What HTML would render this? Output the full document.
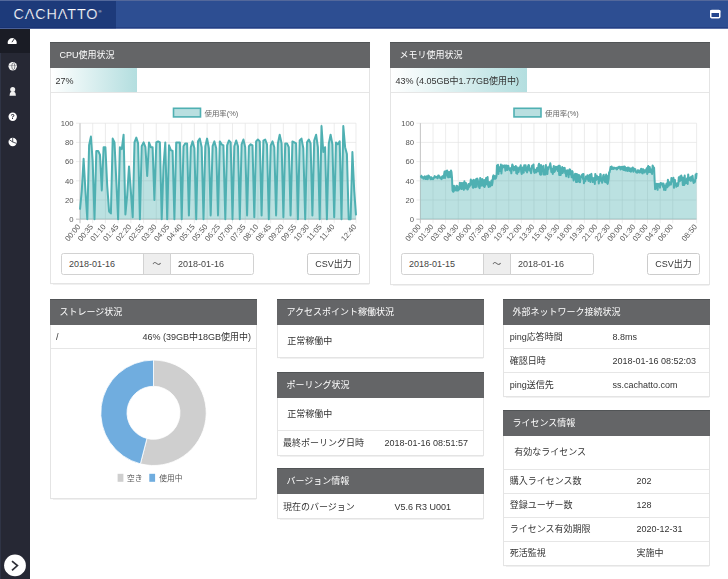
<!DOCTYPE html>
<html lang="ja">
<head>
<meta charset="utf-8">
<title>CACHATTO</title>
<style>
*{box-sizing:border-box;margin:0;padding:0}
html,body{width:728px;height:579px;overflow:hidden;background:#fff}
body{position:relative;font-family:"Liberation Sans","Noto Sans CJK JP",sans-serif;font-size:9px;color:#333;line-height:1;font-weight:400}
.abs{position:absolute}
#content{left:0;top:0;width:728px;height:579px;filter:blur(.4px)}
.bl{filter:blur(.35px)}
#hdr{left:0;top:0;width:728px;height:29px;background:#2d4e92;border-bottom:1px solid #5b70a6;z-index:2}
#logo{left:0;top:0;width:116px;height:29px;background:#1d3a7a;border-bottom:1px solid #4a5f96;z-index:3}
#logot{z-index:4;left:13.4px;top:5.7px;font-size:14.4px;letter-spacing:.9px;color:#fff;font-weight:400;line-height:16px;white-space:nowrap;-webkit-text-stroke:.22px #1d3a7a}
#logot sup{-webkit-text-stroke:0;font-size:4px;vertical-align:top;position:relative;top:-2px;letter-spacing:0}
#side{left:0;top:28px;width:30px;height:551px;background:#262834}
#act{left:0;top:28px;width:30px;height:25px;background:#1a1c25}
.panel{position:absolute;background:#fff;border:1px solid #e4e4e4;box-shadow:0 .6px .8px rgba(0,0,0,.06)}
.ph{position:absolute;left:-1px;top:-1px;right:-1px;height:26px;background:#646567;border-top:1px solid #515456;color:#fff;font-size:9px;font-weight:400;line-height:24.5px;padding-left:9.5px;white-space:nowrap}
.row{position:absolute;left:0;right:0;border-top:1px solid #e6e6e6;white-space:nowrap}
.t{position:absolute;white-space:nowrap;line-height:12px}
.ax{font-family:"Liberation Sans","Noto Sans CJK JP",sans-serif;font-size:7.7px;fill:#555}
.xl{font-size:7.7px;fill:#5a5a5a}
.lg{font-family:"Liberation Sans","Noto Sans CJK JP",sans-serif;font-size:7.4px;fill:#666}
.inp{position:absolute;height:22px;border:1px solid #d2d2d2;background:#fff;font-size:9px;line-height:20px;padding-left:7.5px;color:#444;white-space:nowrap}
.add{position:absolute;height:22px;border:1px solid #d2d2d2;background:#eee;font-size:9px;line-height:20px;text-align:center;color:#555}
.btn{position:absolute;height:22px;border:1px solid #ccc;border-radius:2.5px;background:#fff;font-size:9px;line-height:20px;text-align:center;color:#333;white-space:nowrap}
</style>
</head>
<body>
<div id="hdr" class="abs"></div>
<div id="logo" class="abs"></div>
<div id="logot" class="abs">CACHATTO<sup>®</sup></div>
<svg class="abs" style="left:0;top:0;z-index:5" width="116" height="27" viewBox="0 0 116 27"><polygon points="27.87,14.14 31.11,14.14 32.27,17.13 26.71,17.13" fill="#1d3a7a"/><polygon points="60.97,14.14 64.21,14.14 65.36,17.13 59.80,17.13" fill="#1d3a7a"/></svg>
<svg class="abs bl" style="left:709px;top:9px;z-index:5" width="13" height="11" viewBox="0 0 13 11"><rect x="1.1" y="1.5" width="10.4" height="8.4" rx="1.2" fill="#1f3f8a" opacity=".55"/><rect x="1.75" y="1.55" width="9" height="7.1" rx="1" fill="none" stroke="#fff" stroke-width="1.5"/><rect x="1.2" y="0.9" width="10.1" height="3" rx=".8" fill="#fff"/></svg>

<div id="side" class="abs"></div>
<div class="abs" style="left:0;top:28px;width:1px;height:551px;background:#2f3445"></div>
<div class="abs" style="left:0;top:27px;width:728px;height:1px;background:rgba(20,40,110,.35);z-index:4"></div>
<div class="abs" style="left:0;top:0;width:728px;height:1px;background:#53689b;z-index:6"></div>
<div id="act" class="abs"></div>
<svg class="abs bl" style="left:-0.7px;top:27.6px" width="30" height="130" viewBox="0 0 30 130">
 <!-- dashboard gauge -->
 <path d="M8.9,15.9 A4.5,4.5 0 1 1 17.5,15.9 Z" fill="#fff"/>
 <path d="M12.9,14.2 L15.6,10.4" stroke="#1a1c25" stroke-width="0.9" fill="none"/>
 <!-- globe -->
 <circle cx="13.7" cy="38.3" r="4.2" fill="#f4f4f4"/>
 <ellipse cx="14.3" cy="38.3" rx="1.5" ry="3.4" fill="none" stroke="#262834" stroke-width="0.7" opacity=".75"/>
 <path d="M10.2,37.6 H17.6" stroke="#262834" stroke-width="0.5" fill="none" opacity=".55"/>
 <!-- user -->
 <circle cx="13.7" cy="61.6" r="2.5" fill="#f0f0f0"/>
 <path d="M10.5,67.8 Q10.5,64.6 12.4,63.6 L15,63.6 Q16.9,64.6 16.9,67.8 Z" fill="#f0f0f0"/>
 <!-- question -->
 <circle cx="13.7" cy="88.8" r="4.2" fill="#fff"/>
 <text x="13.7" y="91.4" text-anchor="middle" font-family="Liberation Sans, sans-serif" font-size="7" font-weight="700" fill="#262834">?</text>
 <!-- pie -->
 <circle cx="13.7" cy="114" r="4.2" fill="#fff"/>
 <path d="M13.7,114 V109.8 M13.7,114 L17.6,115.4 M13.7,114 L10.2,111.6" stroke="#262834" stroke-width="0.8" fill="none"/>
</svg>
<svg class="abs bl" style="left:3px;top:553px" width="24" height="25" viewBox="0 0 24 25"><circle cx="12" cy="12.4" r="10.9" fill="#fff"/><path d="M9,8.2 L14.4,12.6 L9,17.4" fill="none" stroke="#2e2f38" stroke-width="1.7"/></svg>

<div id="content" class="abs">
<!-- CPU panel -->
<div class="panel" style="left:50px;top:42px;width:320px;height:242px">
 <div class="ph">CPU使用状況</div>
 <div class="abs" style="left:0;top:25px;width:86px;height:24px;background:linear-gradient(90deg,#ffffff 0%,#b3dedf 100%)"></div>
 <div class="t" style="left:4.4px;top:31.5px">27%</div>
 <div class="row" style="top:49px;height:1px"></div>
 <svg class="abs" style="left:0;top:50px" width="318" height="155" viewBox="0 0 318 155">
<line x1="25.00" y1="126.20" x2="305.00" y2="126.20" stroke="#e4e4e4" stroke-width="0.7"/>
<text x="22.50" y="128.90" text-anchor="end" class="ax">0</text>
<line x1="25.00" y1="107.00" x2="305.00" y2="107.00" stroke="#e4e4e4" stroke-width="0.7"/>
<text x="22.50" y="109.70" text-anchor="end" class="ax">20</text>
<line x1="25.00" y1="87.80" x2="305.00" y2="87.80" stroke="#e4e4e4" stroke-width="0.7"/>
<text x="22.50" y="90.50" text-anchor="end" class="ax">40</text>
<line x1="25.00" y1="68.60" x2="305.00" y2="68.60" stroke="#e4e4e4" stroke-width="0.7"/>
<text x="22.50" y="71.30" text-anchor="end" class="ax">60</text>
<line x1="25.00" y1="49.40" x2="305.00" y2="49.40" stroke="#e4e4e4" stroke-width="0.7"/>
<text x="22.50" y="52.10" text-anchor="end" class="ax">80</text>
<line x1="25.00" y1="30.20" x2="305.00" y2="30.20" stroke="#e4e4e4" stroke-width="0.7"/>
<text x="22.50" y="32.90" text-anchor="end" class="ax">100</text>
<line x1="29.00" y1="30.20" x2="29.00" y2="130.20" stroke="#e4e4e4" stroke-width="0.7"/>
<text transform="translate(29.80,134.00) rotate(-50)" text-anchor="end" class="ax xl">00:00</text>
<line x1="41.71" y1="30.20" x2="41.71" y2="130.20" stroke="#e4e4e4" stroke-width="0.7"/>
<text transform="translate(42.51,134.00) rotate(-50)" text-anchor="end" class="ax xl">00:35</text>
<line x1="54.42" y1="30.20" x2="54.42" y2="130.20" stroke="#e4e4e4" stroke-width="0.7"/>
<text transform="translate(55.22,134.00) rotate(-50)" text-anchor="end" class="ax xl">01:10</text>
<line x1="67.13" y1="30.20" x2="67.13" y2="130.20" stroke="#e4e4e4" stroke-width="0.7"/>
<text transform="translate(67.93,134.00) rotate(-50)" text-anchor="end" class="ax xl">01:45</text>
<line x1="79.84" y1="30.20" x2="79.84" y2="130.20" stroke="#e4e4e4" stroke-width="0.7"/>
<text transform="translate(80.64,134.00) rotate(-50)" text-anchor="end" class="ax xl">02:20</text>
<line x1="92.55" y1="30.20" x2="92.55" y2="130.20" stroke="#e4e4e4" stroke-width="0.7"/>
<text transform="translate(93.35,134.00) rotate(-50)" text-anchor="end" class="ax xl">02:55</text>
<line x1="105.26" y1="30.20" x2="105.26" y2="130.20" stroke="#e4e4e4" stroke-width="0.7"/>
<text transform="translate(106.06,134.00) rotate(-50)" text-anchor="end" class="ax xl">03:30</text>
<line x1="117.97" y1="30.20" x2="117.97" y2="130.20" stroke="#e4e4e4" stroke-width="0.7"/>
<text transform="translate(118.77,134.00) rotate(-50)" text-anchor="end" class="ax xl">04:05</text>
<line x1="130.68" y1="30.20" x2="130.68" y2="130.20" stroke="#e4e4e4" stroke-width="0.7"/>
<text transform="translate(131.48,134.00) rotate(-50)" text-anchor="end" class="ax xl">04:40</text>
<line x1="143.39" y1="30.20" x2="143.39" y2="130.20" stroke="#e4e4e4" stroke-width="0.7"/>
<text transform="translate(144.19,134.00) rotate(-50)" text-anchor="end" class="ax xl">05:15</text>
<line x1="156.11" y1="30.20" x2="156.11" y2="130.20" stroke="#e4e4e4" stroke-width="0.7"/>
<text transform="translate(156.91,134.00) rotate(-50)" text-anchor="end" class="ax xl">05:50</text>
<line x1="168.82" y1="30.20" x2="168.82" y2="130.20" stroke="#e4e4e4" stroke-width="0.7"/>
<text transform="translate(169.62,134.00) rotate(-50)" text-anchor="end" class="ax xl">06:25</text>
<line x1="181.53" y1="30.20" x2="181.53" y2="130.20" stroke="#e4e4e4" stroke-width="0.7"/>
<text transform="translate(182.33,134.00) rotate(-50)" text-anchor="end" class="ax xl">07:00</text>
<line x1="194.24" y1="30.20" x2="194.24" y2="130.20" stroke="#e4e4e4" stroke-width="0.7"/>
<text transform="translate(195.04,134.00) rotate(-50)" text-anchor="end" class="ax xl">07:35</text>
<line x1="206.95" y1="30.20" x2="206.95" y2="130.20" stroke="#e4e4e4" stroke-width="0.7"/>
<text transform="translate(207.75,134.00) rotate(-50)" text-anchor="end" class="ax xl">08:10</text>
<line x1="219.66" y1="30.20" x2="219.66" y2="130.20" stroke="#e4e4e4" stroke-width="0.7"/>
<text transform="translate(220.46,134.00) rotate(-50)" text-anchor="end" class="ax xl">08:45</text>
<line x1="232.37" y1="30.20" x2="232.37" y2="130.20" stroke="#e4e4e4" stroke-width="0.7"/>
<text transform="translate(233.17,134.00) rotate(-50)" text-anchor="end" class="ax xl">09:20</text>
<line x1="245.08" y1="30.20" x2="245.08" y2="130.20" stroke="#e4e4e4" stroke-width="0.7"/>
<text transform="translate(245.88,134.00) rotate(-50)" text-anchor="end" class="ax xl">09:55</text>
<line x1="257.79" y1="30.20" x2="257.79" y2="130.20" stroke="#e4e4e4" stroke-width="0.7"/>
<text transform="translate(258.59,134.00) rotate(-50)" text-anchor="end" class="ax xl">10:30</text>
<line x1="270.50" y1="30.20" x2="270.50" y2="130.20" stroke="#e4e4e4" stroke-width="0.7"/>
<text transform="translate(271.30,134.00) rotate(-50)" text-anchor="end" class="ax xl">11:05</text>
<line x1="283.21" y1="30.20" x2="283.21" y2="130.20" stroke="#e4e4e4" stroke-width="0.7"/>
<text transform="translate(284.01,134.00) rotate(-50)" text-anchor="end" class="ax xl">11:40</text>
<line x1="305.00" y1="30.20" x2="305.00" y2="130.20" stroke="#e4e4e4" stroke-width="0.7"/>
<text transform="translate(305.80,134.00) rotate(-50)" text-anchor="end" class="ax xl">12:40</text>
<line x1="29.00" y1="30.20" x2="29.00" y2="130.20" stroke="#bdbdbd" stroke-width="0.8"/>
<line x1="25.00" y1="126.20" x2="305.00" y2="126.20" stroke="#bdbdbd" stroke-width="0.8"/>
<polygon points="29.0,126.2 29.0,116.6 30.8,97.4 32.6,65.7 34.4,97.4 36.3,126.2 38.1,52.3 39.9,43.6 41.7,68.6 43.5,126.2 45.3,58.0 47.2,58.0 49.0,61.9 50.8,97.4 52.6,54.2 54.4,54.2 56.2,92.6 58.1,118.5 59.9,120.4 61.7,45.6 63.5,49.4 65.3,87.8 67.1,126.2 68.9,54.2 70.8,56.1 72.6,41.7 74.4,121.4 76.2,102.2 78.0,73.4 79.8,97.4 81.7,124.3 83.5,49.4 85.3,44.6 87.1,50.4 88.9,126.2 90.7,53.2 92.6,49.4 94.4,54.2 96.2,83.0 98.0,49.4 99.8,54.2 101.6,54.2 103.4,107.0 105.3,49.4 107.1,48.4 108.9,49.4 110.7,126.2 112.5,73.4 114.3,49.4 116.2,126.2 118.0,52.3 119.8,57.1 121.6,58.0 123.4,126.2 125.2,49.4 127.1,49.4 128.9,49.4 130.7,126.2 132.5,53.2 134.3,50.4 136.1,50.4 137.9,122.4 139.8,54.2 141.6,48.4 143.4,55.2 145.2,126.2 147.0,48.4 148.8,45.6 150.7,54.2 152.5,126.2 154.3,53.2 156.1,45.6 157.9,55.2 159.7,122.4 161.6,53.2 163.4,48.4 165.2,55.2 167.0,122.4 168.8,48.4 170.6,51.3 172.4,52.3 174.3,126.2 176.1,52.3 177.9,47.5 179.7,49.4 181.5,126.2 183.3,53.2 185.2,47.5 187.0,53.2 188.8,126.2 190.6,51.3 192.4,46.5 194.2,54.2 196.1,122.4 197.9,53.2 199.7,51.3 201.5,52.3 203.3,124.3 205.1,48.4 206.9,46.5 208.8,48.4 210.6,122.4 212.4,47.5 214.2,46.5 216.0,51.3 217.8,126.2 219.7,52.3 221.5,48.4 223.3,54.2 225.1,122.4 226.9,50.4 228.7,41.7 230.6,50.4 232.4,124.3 234.2,50.4 236.0,50.4 237.8,54.2 239.6,122.4 241.4,48.4 243.3,49.4 245.1,50.4 246.9,126.2 248.7,47.5 250.5,45.6 252.3,55.2 254.2,126.2 256.0,49.4 257.8,46.5 259.6,50.4 261.4,122.4 263.2,47.5 265.1,41.7 266.9,54.2 268.7,126.2 270.5,33.1 272.3,59.0 274.1,54.2 275.9,126.2 277.8,50.4 279.6,41.7 281.4,51.3 283.2,124.3 285.0,49.4 286.8,51.3 288.7,48.4 290.5,126.2 292.3,33.1 294.1,54.2 295.9,60.9 297.7,126.2 299.6,126.2 301.4,59.0 303.2,97.4 305.0,122.4 305.0,126.2" fill="rgba(75,175,177,0.38)"/>
<polyline points="29.0,116.6 30.8,97.4 32.6,65.7 34.4,97.4 36.3,126.2 38.1,52.3 39.9,43.6 41.7,68.6 43.5,126.2 45.3,58.0 47.2,58.0 49.0,61.9 50.8,97.4 52.6,54.2 54.4,54.2 56.2,92.6 58.1,118.5 59.9,120.4 61.7,45.6 63.5,49.4 65.3,87.8 67.1,126.2 68.9,54.2 70.8,56.1 72.6,41.7 74.4,121.4 76.2,102.2 78.0,73.4 79.8,97.4 81.7,124.3 83.5,49.4 85.3,44.6 87.1,50.4 88.9,126.2 90.7,53.2 92.6,49.4 94.4,54.2 96.2,83.0 98.0,49.4 99.8,54.2 101.6,54.2 103.4,107.0 105.3,49.4 107.1,48.4 108.9,49.4 110.7,126.2 112.5,73.4 114.3,49.4 116.2,126.2 118.0,52.3 119.8,57.1 121.6,58.0 123.4,126.2 125.2,49.4 127.1,49.4 128.9,49.4 130.7,126.2 132.5,53.2 134.3,50.4 136.1,50.4 137.9,122.4 139.8,54.2 141.6,48.4 143.4,55.2 145.2,126.2 147.0,48.4 148.8,45.6 150.7,54.2 152.5,126.2 154.3,53.2 156.1,45.6 157.9,55.2 159.7,122.4 161.6,53.2 163.4,48.4 165.2,55.2 167.0,122.4 168.8,48.4 170.6,51.3 172.4,52.3 174.3,126.2 176.1,52.3 177.9,47.5 179.7,49.4 181.5,126.2 183.3,53.2 185.2,47.5 187.0,53.2 188.8,126.2 190.6,51.3 192.4,46.5 194.2,54.2 196.1,122.4 197.9,53.2 199.7,51.3 201.5,52.3 203.3,124.3 205.1,48.4 206.9,46.5 208.8,48.4 210.6,122.4 212.4,47.5 214.2,46.5 216.0,51.3 217.8,126.2 219.7,52.3 221.5,48.4 223.3,54.2 225.1,122.4 226.9,50.4 228.7,41.7 230.6,50.4 232.4,124.3 234.2,50.4 236.0,50.4 237.8,54.2 239.6,122.4 241.4,48.4 243.3,49.4 245.1,50.4 246.9,126.2 248.7,47.5 250.5,45.6 252.3,55.2 254.2,126.2 256.0,49.4 257.8,46.5 259.6,50.4 261.4,122.4 263.2,47.5 265.1,41.7 266.9,54.2 268.7,126.2 270.5,33.1 272.3,59.0 274.1,54.2 275.9,126.2 277.8,50.4 279.6,41.7 281.4,51.3 283.2,124.3 285.0,49.4 286.8,51.3 288.7,48.4 290.5,126.2 292.3,33.1 294.1,54.2 295.9,60.9 297.7,126.2 299.6,126.2 301.4,59.0 303.2,97.4 305.0,122.4" fill="none" stroke="#4fb0b2" stroke-width="2" stroke-linejoin="round"/>
<rect x="122.50" y="15.30" width="27" height="8.6" fill="#b9dfe0" stroke="#4fb0b2" stroke-width="1.6"/>
<text x="153.50" y="22.60" class="lg">使用率(%)</text>
 </svg>
 <div class="inp" style="left:9.5px;top:209.5px;width:83.5px;border-radius:2.5px 0 0 2.5px">2018-01-16</div>
 <div class="add" style="left:92px;top:209.5px;width:27.5px">～</div>
 <div class="inp" style="left:118.5px;top:209.5px;width:84px;border-radius:0 2.5px 2.5px 0">2018-01-16</div>
 <div class="btn" style="left:256px;top:209.5px;width:53px">CSV出力</div>
</div>

<!-- Memory panel -->
<div class="panel" style="left:390px;top:42px;width:320px;height:243px">
 <div class="ph">メモリ使用状況</div>
 <div class="abs" style="left:0;top:25px;width:136px;height:24px;background:linear-gradient(90deg,#ffffff 0%,#b3dedf 100%)"></div>
 <div class="t" style="left:4.4px;top:31.5px">43% (4.05GB中1.77GB使用中)</div>
 <div class="row" style="top:49px;height:1px"></div>
 <svg class="abs" style="left:0;top:50px" width="318" height="155" viewBox="0 0 318 155">
<line x1="25.40" y1="126.20" x2="305.60" y2="126.20" stroke="#e4e4e4" stroke-width="0.7"/>
<text x="23.00" y="128.90" text-anchor="end" class="ax">0</text>
<line x1="25.40" y1="107.00" x2="305.60" y2="107.00" stroke="#e4e4e4" stroke-width="0.7"/>
<text x="23.00" y="109.70" text-anchor="end" class="ax">20</text>
<line x1="25.40" y1="87.80" x2="305.60" y2="87.80" stroke="#e4e4e4" stroke-width="0.7"/>
<text x="23.00" y="90.50" text-anchor="end" class="ax">40</text>
<line x1="25.40" y1="68.60" x2="305.60" y2="68.60" stroke="#e4e4e4" stroke-width="0.7"/>
<text x="23.00" y="71.30" text-anchor="end" class="ax">60</text>
<line x1="25.40" y1="49.40" x2="305.60" y2="49.40" stroke="#e4e4e4" stroke-width="0.7"/>
<text x="23.00" y="52.10" text-anchor="end" class="ax">80</text>
<line x1="25.40" y1="30.20" x2="305.60" y2="30.20" stroke="#e4e4e4" stroke-width="0.7"/>
<text x="23.00" y="32.90" text-anchor="end" class="ax">100</text>
<line x1="29.40" y1="30.20" x2="29.40" y2="130.20" stroke="#e4e4e4" stroke-width="0.7"/>
<text transform="translate(30.20,134.00) rotate(-50)" text-anchor="end" class="ax xl">00:00</text>
<line x1="42.02" y1="30.20" x2="42.02" y2="130.20" stroke="#e4e4e4" stroke-width="0.7"/>
<text transform="translate(42.82,134.00) rotate(-50)" text-anchor="end" class="ax xl">01:30</text>
<line x1="54.64" y1="30.20" x2="54.64" y2="130.20" stroke="#e4e4e4" stroke-width="0.7"/>
<text transform="translate(55.44,134.00) rotate(-50)" text-anchor="end" class="ax xl">03:00</text>
<line x1="67.25" y1="30.20" x2="67.25" y2="130.20" stroke="#e4e4e4" stroke-width="0.7"/>
<text transform="translate(68.05,134.00) rotate(-50)" text-anchor="end" class="ax xl">04:30</text>
<line x1="79.87" y1="30.20" x2="79.87" y2="130.20" stroke="#e4e4e4" stroke-width="0.7"/>
<text transform="translate(80.67,134.00) rotate(-50)" text-anchor="end" class="ax xl">06:00</text>
<line x1="92.49" y1="30.20" x2="92.49" y2="130.20" stroke="#e4e4e4" stroke-width="0.7"/>
<text transform="translate(93.29,134.00) rotate(-50)" text-anchor="end" class="ax xl">07:30</text>
<line x1="105.11" y1="30.20" x2="105.11" y2="130.20" stroke="#e4e4e4" stroke-width="0.7"/>
<text transform="translate(105.91,134.00) rotate(-50)" text-anchor="end" class="ax xl">09:00</text>
<line x1="117.73" y1="30.20" x2="117.73" y2="130.20" stroke="#e4e4e4" stroke-width="0.7"/>
<text transform="translate(118.53,134.00) rotate(-50)" text-anchor="end" class="ax xl">10:30</text>
<line x1="130.35" y1="30.20" x2="130.35" y2="130.20" stroke="#e4e4e4" stroke-width="0.7"/>
<text transform="translate(131.15,134.00) rotate(-50)" text-anchor="end" class="ax xl">12:00</text>
<line x1="142.96" y1="30.20" x2="142.96" y2="130.20" stroke="#e4e4e4" stroke-width="0.7"/>
<text transform="translate(143.76,134.00) rotate(-50)" text-anchor="end" class="ax xl">13:30</text>
<line x1="155.58" y1="30.20" x2="155.58" y2="130.20" stroke="#e4e4e4" stroke-width="0.7"/>
<text transform="translate(156.38,134.00) rotate(-50)" text-anchor="end" class="ax xl">15:00</text>
<line x1="168.20" y1="30.20" x2="168.20" y2="130.20" stroke="#e4e4e4" stroke-width="0.7"/>
<text transform="translate(169.00,134.00) rotate(-50)" text-anchor="end" class="ax xl">16:30</text>
<line x1="180.82" y1="30.20" x2="180.82" y2="130.20" stroke="#e4e4e4" stroke-width="0.7"/>
<text transform="translate(181.62,134.00) rotate(-50)" text-anchor="end" class="ax xl">18:00</text>
<line x1="193.44" y1="30.20" x2="193.44" y2="130.20" stroke="#e4e4e4" stroke-width="0.7"/>
<text transform="translate(194.24,134.00) rotate(-50)" text-anchor="end" class="ax xl">19:30</text>
<line x1="206.06" y1="30.20" x2="206.06" y2="130.20" stroke="#e4e4e4" stroke-width="0.7"/>
<text transform="translate(206.86,134.00) rotate(-50)" text-anchor="end" class="ax xl">21:00</text>
<line x1="218.67" y1="30.20" x2="218.67" y2="130.20" stroke="#e4e4e4" stroke-width="0.7"/>
<text transform="translate(219.47,134.00) rotate(-50)" text-anchor="end" class="ax xl">22:30</text>
<line x1="231.29" y1="30.20" x2="231.29" y2="130.20" stroke="#e4e4e4" stroke-width="0.7"/>
<text transform="translate(232.09,134.00) rotate(-50)" text-anchor="end" class="ax xl">00:00</text>
<line x1="243.91" y1="30.20" x2="243.91" y2="130.20" stroke="#e4e4e4" stroke-width="0.7"/>
<text transform="translate(244.71,134.00) rotate(-50)" text-anchor="end" class="ax xl">01:30</text>
<line x1="256.53" y1="30.20" x2="256.53" y2="130.20" stroke="#e4e4e4" stroke-width="0.7"/>
<text transform="translate(257.33,134.00) rotate(-50)" text-anchor="end" class="ax xl">03:00</text>
<line x1="269.15" y1="30.20" x2="269.15" y2="130.20" stroke="#e4e4e4" stroke-width="0.7"/>
<text transform="translate(269.95,134.00) rotate(-50)" text-anchor="end" class="ax xl">04:30</text>
<line x1="281.77" y1="30.20" x2="281.77" y2="130.20" stroke="#e4e4e4" stroke-width="0.7"/>
<text transform="translate(282.57,134.00) rotate(-50)" text-anchor="end" class="ax xl">06:00</text>
<line x1="305.60" y1="30.20" x2="305.60" y2="130.20" stroke="#e4e4e4" stroke-width="0.7"/>
<text transform="translate(306.40,134.00) rotate(-50)" text-anchor="end" class="ax xl">08:50</text>
<line x1="29.40" y1="30.20" x2="29.40" y2="130.20" stroke="#bdbdbd" stroke-width="0.8"/>
<line x1="25.40" y1="126.20" x2="305.60" y2="126.20" stroke="#bdbdbd" stroke-width="0.8"/>
<polygon points="29.4,126.2 29.4,84.6 29.9,84.2 30.4,82.8 30.9,84.6 31.4,84.4 31.9,84.1 32.4,85.7 32.9,84.4 33.4,83.9 33.8,83.3 34.3,86.0 34.8,85.2 35.3,86.0 35.8,83.3 36.3,83.7 36.8,86.2 37.3,82.6 37.8,82.7 38.3,83.8 38.8,84.0 39.3,85.8 39.8,86.3 40.3,84.3 40.8,86.1 41.3,85.6 41.8,85.4 42.2,86.2 42.7,84.6 43.2,84.7 43.7,83.1 44.2,84.4 44.7,83.9 45.2,84.4 45.7,83.8 46.2,84.6 46.7,85.3 47.2,82.5 47.7,82.5 48.2,83.1 48.7,83.6 49.2,85.1 49.7,85.5 50.2,85.3 50.6,86.1 51.1,83.4 51.6,84.8 52.1,83.1 52.6,84.9 53.1,81.5 53.6,78.4 54.1,84.9 54.6,83.3 55.1,77.9 55.6,81.3 56.1,77.4 56.6,81.9 57.1,84.4 57.6,80.1 58.1,78.9 58.6,82.8 59.0,84.3 59.5,82.4 60.0,77.5 60.5,79.1 61.0,84.7 61.5,97.4 62.0,98.5 62.5,98.7 63.0,92.8 63.5,97.6 64.0,94.5 64.5,95.3 65.0,97.3 65.5,92.7 66.0,97.6 66.5,93.2 67.0,97.6 67.4,94.9 67.9,96.6 68.4,96.0 68.9,89.7 69.4,91.0 69.9,95.4 70.4,90.0 70.9,96.1 71.4,94.3 71.9,89.9 72.4,91.7 72.9,96.8 73.4,88.2 73.9,95.6 74.4,95.0 74.9,89.9 75.4,94.1 75.8,94.4 76.3,96.5 76.8,96.3 77.3,91.2 77.8,94.6 78.3,90.7 78.8,93.0 79.3,92.1 79.8,86.6 80.3,91.6 80.8,90.6 81.3,87.4 81.8,94.6 82.3,94.8 82.8,86.7 83.3,87.5 83.8,93.6 84.2,94.1 84.7,88.1 85.2,85.9 85.7,93.8 86.2,85.6 86.7,86.3 87.2,89.2 87.7,91.1 88.2,94.5 88.7,95.1 89.2,84.9 89.7,92.8 90.2,87.6 90.7,92.5 91.2,86.1 91.7,88.5 92.2,91.8 92.6,93.1 93.1,86.9 93.6,94.1 94.1,92.3 94.6,88.5 95.1,85.1 95.6,87.7 96.1,91.4 96.6,84.1 97.1,92.1 97.6,94.1 98.1,91.2 98.6,89.1 99.1,93.4 99.6,92.0 100.1,89.8 100.5,87.4 101.0,92.3 101.5,89.6 102.0,83.5 102.5,82.3 103.0,85.9 103.5,83.7 104.0,83.0 104.5,85.8 105.0,84.9 105.5,83.0 106.0,72.4 106.5,74.4 107.0,71.8 107.5,80.9 108.0,75.0 108.5,76.5 108.9,74.1 109.4,78.0 109.9,71.5 110.4,80.4 110.9,75.8 111.4,74.0 111.9,72.4 112.4,74.0 112.9,74.3 113.4,73.5 113.9,72.3 114.4,77.7 114.9,74.5 115.4,72.4 115.9,72.7 116.4,77.1 116.9,73.5 117.3,72.8 117.8,75.6 118.3,75.1 118.8,77.4 119.3,75.5 119.8,75.2 120.3,80.3 120.8,74.9 121.3,71.5 121.8,72.6 122.3,74.1 122.8,77.4 123.3,74.0 123.8,75.5 124.3,76.9 124.8,73.0 125.3,80.3 125.7,73.9 126.2,80.8 126.7,75.3 127.2,76.5 127.7,78.9 128.2,74.4 128.7,76.3 129.2,75.2 129.7,72.2 130.2,78.7 130.7,81.1 131.2,78.2 131.7,74.5 132.2,79.2 132.7,79.6 133.2,72.2 133.7,74.7 134.1,76.9 134.6,72.3 135.1,78.0 135.6,74.6 136.1,79.4 136.6,77.0 137.1,73.1 137.6,72.0 138.1,72.3 138.6,77.5 139.1,75.4 139.6,78.2 140.1,80.2 140.6,76.3 141.1,72.7 141.6,72.5 142.1,74.0 142.5,71.4 143.0,78.7 143.5,79.9 144.0,76.8 144.5,78.8 145.0,79.5 145.5,77.2 146.0,74.9 146.5,76.3 147.0,78.4 147.5,72.4 148.0,70.8 148.5,76.8 149.0,81.2 149.5,81.6 150.0,71.9 150.5,81.5 150.9,73.7 151.4,75.3 151.9,78.3 152.4,72.7 152.9,81.6 153.4,80.2 153.9,76.5 154.4,81.4 154.9,72.1 155.4,78.9 155.9,79.9 156.4,81.0 156.9,74.3 157.4,76.3 157.9,74.2 158.4,73.9 158.9,72.1 159.3,70.3 159.8,73.4 160.3,79.0 160.8,75.8 161.3,79.1 161.8,81.0 162.3,75.7 162.8,72.9 163.3,79.1 163.8,78.2 164.3,77.6 164.8,73.8 165.3,76.0 165.8,75.1 166.3,73.7 166.8,78.0 167.3,73.8 167.7,72.7 168.2,82.0 168.7,72.8 169.2,75.4 169.7,82.1 170.2,78.7 170.7,77.0 171.2,74.1 171.7,80.1 172.2,78.3 172.7,75.1 173.2,76.2 173.7,74.9 174.2,80.2 174.7,78.4 175.2,83.3 175.7,78.0 176.1,77.2 176.6,79.3 177.1,78.6 177.6,84.2 178.1,77.1 178.6,76.4 179.1,76.7 179.6,81.5 180.1,79.0 180.6,84.2 181.1,78.1 181.6,78.9 182.1,84.4 182.6,87.4 183.1,83.8 183.6,82.9 184.1,80.8 184.5,83.9 185.0,89.0 185.5,80.9 186.0,89.0 186.5,81.4 187.0,88.2 187.5,86.7 188.0,82.1 188.5,89.1 189.0,89.2 189.5,85.5 190.0,83.5 190.5,82.3 191.0,83.9 191.5,81.2 192.0,86.0 192.5,81.1 192.9,90.3 193.4,88.8 193.9,85.6 194.4,88.1 194.9,83.5 195.4,84.4 195.9,85.6 196.4,82.3 196.9,85.2 197.4,87.9 197.9,87.1 198.4,82.2 198.9,81.7 199.4,89.0 199.9,82.2 200.4,80.9 200.9,85.6 201.3,85.1 201.8,89.0 202.3,85.5 202.8,85.8 203.3,84.8 203.8,90.9 204.3,80.9 204.8,85.7 205.3,86.9 205.8,82.7 206.3,85.2 206.8,86.0 207.3,83.9 207.8,90.5 208.3,85.5 208.8,86.8 209.3,81.1 209.7,81.4 210.2,88.3 210.7,86.2 211.2,89.8 211.7,86.6 212.2,82.5 212.7,81.7 213.2,86.1 213.7,87.8 214.2,89.1 214.7,84.6 215.2,81.4 215.7,89.8 216.2,82.9 216.7,90.9 217.2,88.3 217.7,85.3 218.1,79.2 218.6,79.4 219.1,76.7 219.6,73.9 220.1,76.0 220.6,73.6 221.1,76.0 221.6,74.5 222.1,75.6 222.6,75.9 223.1,74.6 223.6,75.0 224.1,75.3 224.6,75.2 225.1,74.8 225.6,76.4 226.1,76.2 226.5,74.5 227.0,74.5 227.5,75.0 228.0,73.7 228.5,74.8 229.0,73.8 229.5,76.5 230.0,74.3 230.5,74.1 231.0,73.7 231.5,76.4 232.0,76.4 232.5,73.7 233.0,77.0 233.5,73.5 234.0,74.0 234.5,77.5 234.9,77.1 235.4,74.9 235.9,77.1 236.4,77.9 236.9,74.5 237.4,76.5 237.9,74.8 238.4,78.0 238.9,76.7 239.4,75.5 239.9,78.7 240.4,77.9 240.9,75.7 241.4,74.7 241.9,74.5 242.4,78.7 242.8,76.9 243.3,75.7 243.8,77.0 244.3,76.2 244.8,78.7 245.3,79.4 245.8,79.3 246.3,79.7 246.8,77.3 247.3,77.5 247.8,77.4 248.3,79.5 248.8,79.4 249.3,79.3 249.8,76.4 250.3,75.7 250.8,76.1 251.2,80.2 251.7,80.4 252.2,76.2 252.7,78.7 253.2,77.3 253.7,79.5 254.2,78.4 254.7,76.9 255.2,77.0 255.7,75.3 256.2,81.0 256.7,74.4 257.2,73.0 257.7,79.3 258.2,76.7 258.7,74.0 259.2,77.2 259.6,79.2 260.1,79.5 260.6,76.2 261.1,80.9 261.6,72.5 262.1,73.4 262.6,74.3 263.1,74.9 263.6,86.7 264.1,96.3 264.6,94.4 265.1,95.1 265.6,90.7 266.1,92.1 266.6,96.8 267.1,90.8 267.6,92.1 268.0,91.6 268.5,91.1 269.0,94.7 269.5,90.0 270.0,90.0 270.5,91.5 271.0,90.7 271.5,90.5 272.0,93.8 272.5,90.6 273.0,96.8 273.5,94.0 274.0,92.6 274.5,97.0 275.0,93.4 275.5,90.4 276.0,90.4 276.4,94.2 276.9,86.8 277.4,89.5 277.9,92.7 278.4,89.2 278.9,90.0 279.4,90.2 279.9,91.6 280.4,85.1 280.9,88.7 281.4,88.0 281.9,87.2 282.4,84.8 282.9,94.8 283.4,88.4 283.9,86.9 284.4,91.9 284.8,90.3 285.3,93.8 285.8,92.2 286.3,90.2 286.8,93.0 287.3,91.2 287.8,84.2 288.3,87.8 288.8,88.2 289.3,83.2 289.8,87.3 290.3,82.6 290.8,86.3 291.3,84.4 291.8,92.0 292.3,86.3 292.8,84.5 293.2,91.9 293.7,82.5 294.2,90.5 294.7,87.1 295.2,90.1 295.7,86.6 296.2,85.2 296.7,90.9 297.2,81.4 297.7,86.9 298.2,85.6 298.7,84.7 299.2,87.1 299.7,87.8 300.2,83.8 300.7,84.6 301.2,87.5 301.6,82.8 302.1,87.1 302.6,89.9 303.1,87.4 303.6,89.4 304.1,88.1 304.6,81.6 305.1,85.3 305.6,79.9 305.6,126.2" fill="rgba(75,175,177,0.38)"/>
<polyline points="29.4,84.6 29.9,84.2 30.4,82.8 30.9,84.6 31.4,84.4 31.9,84.1 32.4,85.7 32.9,84.4 33.4,83.9 33.8,83.3 34.3,86.0 34.8,85.2 35.3,86.0 35.8,83.3 36.3,83.7 36.8,86.2 37.3,82.6 37.8,82.7 38.3,83.8 38.8,84.0 39.3,85.8 39.8,86.3 40.3,84.3 40.8,86.1 41.3,85.6 41.8,85.4 42.2,86.2 42.7,84.6 43.2,84.7 43.7,83.1 44.2,84.4 44.7,83.9 45.2,84.4 45.7,83.8 46.2,84.6 46.7,85.3 47.2,82.5 47.7,82.5 48.2,83.1 48.7,83.6 49.2,85.1 49.7,85.5 50.2,85.3 50.6,86.1 51.1,83.4 51.6,84.8 52.1,83.1 52.6,84.9 53.1,81.5 53.6,78.4 54.1,84.9 54.6,83.3 55.1,77.9 55.6,81.3 56.1,77.4 56.6,81.9 57.1,84.4 57.6,80.1 58.1,78.9 58.6,82.8 59.0,84.3 59.5,82.4 60.0,77.5 60.5,79.1 61.0,84.7 61.5,97.4 62.0,98.5 62.5,98.7 63.0,92.8 63.5,97.6 64.0,94.5 64.5,95.3 65.0,97.3 65.5,92.7 66.0,97.6 66.5,93.2 67.0,97.6 67.4,94.9 67.9,96.6 68.4,96.0 68.9,89.7 69.4,91.0 69.9,95.4 70.4,90.0 70.9,96.1 71.4,94.3 71.9,89.9 72.4,91.7 72.9,96.8 73.4,88.2 73.9,95.6 74.4,95.0 74.9,89.9 75.4,94.1 75.8,94.4 76.3,96.5 76.8,96.3 77.3,91.2 77.8,94.6 78.3,90.7 78.8,93.0 79.3,92.1 79.8,86.6 80.3,91.6 80.8,90.6 81.3,87.4 81.8,94.6 82.3,94.8 82.8,86.7 83.3,87.5 83.8,93.6 84.2,94.1 84.7,88.1 85.2,85.9 85.7,93.8 86.2,85.6 86.7,86.3 87.2,89.2 87.7,91.1 88.2,94.5 88.7,95.1 89.2,84.9 89.7,92.8 90.2,87.6 90.7,92.5 91.2,86.1 91.7,88.5 92.2,91.8 92.6,93.1 93.1,86.9 93.6,94.1 94.1,92.3 94.6,88.5 95.1,85.1 95.6,87.7 96.1,91.4 96.6,84.1 97.1,92.1 97.6,94.1 98.1,91.2 98.6,89.1 99.1,93.4 99.6,92.0 100.1,89.8 100.5,87.4 101.0,92.3 101.5,89.6 102.0,83.5 102.5,82.3 103.0,85.9 103.5,83.7 104.0,83.0 104.5,85.8 105.0,84.9 105.5,83.0 106.0,72.4 106.5,74.4 107.0,71.8 107.5,80.9 108.0,75.0 108.5,76.5 108.9,74.1 109.4,78.0 109.9,71.5 110.4,80.4 110.9,75.8 111.4,74.0 111.9,72.4 112.4,74.0 112.9,74.3 113.4,73.5 113.9,72.3 114.4,77.7 114.9,74.5 115.4,72.4 115.9,72.7 116.4,77.1 116.9,73.5 117.3,72.8 117.8,75.6 118.3,75.1 118.8,77.4 119.3,75.5 119.8,75.2 120.3,80.3 120.8,74.9 121.3,71.5 121.8,72.6 122.3,74.1 122.8,77.4 123.3,74.0 123.8,75.5 124.3,76.9 124.8,73.0 125.3,80.3 125.7,73.9 126.2,80.8 126.7,75.3 127.2,76.5 127.7,78.9 128.2,74.4 128.7,76.3 129.2,75.2 129.7,72.2 130.2,78.7 130.7,81.1 131.2,78.2 131.7,74.5 132.2,79.2 132.7,79.6 133.2,72.2 133.7,74.7 134.1,76.9 134.6,72.3 135.1,78.0 135.6,74.6 136.1,79.4 136.6,77.0 137.1,73.1 137.6,72.0 138.1,72.3 138.6,77.5 139.1,75.4 139.6,78.2 140.1,80.2 140.6,76.3 141.1,72.7 141.6,72.5 142.1,74.0 142.5,71.4 143.0,78.7 143.5,79.9 144.0,76.8 144.5,78.8 145.0,79.5 145.5,77.2 146.0,74.9 146.5,76.3 147.0,78.4 147.5,72.4 148.0,70.8 148.5,76.8 149.0,81.2 149.5,81.6 150.0,71.9 150.5,81.5 150.9,73.7 151.4,75.3 151.9,78.3 152.4,72.7 152.9,81.6 153.4,80.2 153.9,76.5 154.4,81.4 154.9,72.1 155.4,78.9 155.9,79.9 156.4,81.0 156.9,74.3 157.4,76.3 157.9,74.2 158.4,73.9 158.9,72.1 159.3,70.3 159.8,73.4 160.3,79.0 160.8,75.8 161.3,79.1 161.8,81.0 162.3,75.7 162.8,72.9 163.3,79.1 163.8,78.2 164.3,77.6 164.8,73.8 165.3,76.0 165.8,75.1 166.3,73.7 166.8,78.0 167.3,73.8 167.7,72.7 168.2,82.0 168.7,72.8 169.2,75.4 169.7,82.1 170.2,78.7 170.7,77.0 171.2,74.1 171.7,80.1 172.2,78.3 172.7,75.1 173.2,76.2 173.7,74.9 174.2,80.2 174.7,78.4 175.2,83.3 175.7,78.0 176.1,77.2 176.6,79.3 177.1,78.6 177.6,84.2 178.1,77.1 178.6,76.4 179.1,76.7 179.6,81.5 180.1,79.0 180.6,84.2 181.1,78.1 181.6,78.9 182.1,84.4 182.6,87.4 183.1,83.8 183.6,82.9 184.1,80.8 184.5,83.9 185.0,89.0 185.5,80.9 186.0,89.0 186.5,81.4 187.0,88.2 187.5,86.7 188.0,82.1 188.5,89.1 189.0,89.2 189.5,85.5 190.0,83.5 190.5,82.3 191.0,83.9 191.5,81.2 192.0,86.0 192.5,81.1 192.9,90.3 193.4,88.8 193.9,85.6 194.4,88.1 194.9,83.5 195.4,84.4 195.9,85.6 196.4,82.3 196.9,85.2 197.4,87.9 197.9,87.1 198.4,82.2 198.9,81.7 199.4,89.0 199.9,82.2 200.4,80.9 200.9,85.6 201.3,85.1 201.8,89.0 202.3,85.5 202.8,85.8 203.3,84.8 203.8,90.9 204.3,80.9 204.8,85.7 205.3,86.9 205.8,82.7 206.3,85.2 206.8,86.0 207.3,83.9 207.8,90.5 208.3,85.5 208.8,86.8 209.3,81.1 209.7,81.4 210.2,88.3 210.7,86.2 211.2,89.8 211.7,86.6 212.2,82.5 212.7,81.7 213.2,86.1 213.7,87.8 214.2,89.1 214.7,84.6 215.2,81.4 215.7,89.8 216.2,82.9 216.7,90.9 217.2,88.3 217.7,85.3 218.1,79.2 218.6,79.4 219.1,76.7 219.6,73.9 220.1,76.0 220.6,73.6 221.1,76.0 221.6,74.5 222.1,75.6 222.6,75.9 223.1,74.6 223.6,75.0 224.1,75.3 224.6,75.2 225.1,74.8 225.6,76.4 226.1,76.2 226.5,74.5 227.0,74.5 227.5,75.0 228.0,73.7 228.5,74.8 229.0,73.8 229.5,76.5 230.0,74.3 230.5,74.1 231.0,73.7 231.5,76.4 232.0,76.4 232.5,73.7 233.0,77.0 233.5,73.5 234.0,74.0 234.5,77.5 234.9,77.1 235.4,74.9 235.9,77.1 236.4,77.9 236.9,74.5 237.4,76.5 237.9,74.8 238.4,78.0 238.9,76.7 239.4,75.5 239.9,78.7 240.4,77.9 240.9,75.7 241.4,74.7 241.9,74.5 242.4,78.7 242.8,76.9 243.3,75.7 243.8,77.0 244.3,76.2 244.8,78.7 245.3,79.4 245.8,79.3 246.3,79.7 246.8,77.3 247.3,77.5 247.8,77.4 248.3,79.5 248.8,79.4 249.3,79.3 249.8,76.4 250.3,75.7 250.8,76.1 251.2,80.2 251.7,80.4 252.2,76.2 252.7,78.7 253.2,77.3 253.7,79.5 254.2,78.4 254.7,76.9 255.2,77.0 255.7,75.3 256.2,81.0 256.7,74.4 257.2,73.0 257.7,79.3 258.2,76.7 258.7,74.0 259.2,77.2 259.6,79.2 260.1,79.5 260.6,76.2 261.1,80.9 261.6,72.5 262.1,73.4 262.6,74.3 263.1,74.9 263.6,86.7 264.1,96.3 264.6,94.4 265.1,95.1 265.6,90.7 266.1,92.1 266.6,96.8 267.1,90.8 267.6,92.1 268.0,91.6 268.5,91.1 269.0,94.7 269.5,90.0 270.0,90.0 270.5,91.5 271.0,90.7 271.5,90.5 272.0,93.8 272.5,90.6 273.0,96.8 273.5,94.0 274.0,92.6 274.5,97.0 275.0,93.4 275.5,90.4 276.0,90.4 276.4,94.2 276.9,86.8 277.4,89.5 277.9,92.7 278.4,89.2 278.9,90.0 279.4,90.2 279.9,91.6 280.4,85.1 280.9,88.7 281.4,88.0 281.9,87.2 282.4,84.8 282.9,94.8 283.4,88.4 283.9,86.9 284.4,91.9 284.8,90.3 285.3,93.8 285.8,92.2 286.3,90.2 286.8,93.0 287.3,91.2 287.8,84.2 288.3,87.8 288.8,88.2 289.3,83.2 289.8,87.3 290.3,82.6 290.8,86.3 291.3,84.4 291.8,92.0 292.3,86.3 292.8,84.5 293.2,91.9 293.7,82.5 294.2,90.5 294.7,87.1 295.2,90.1 295.7,86.6 296.2,85.2 296.7,90.9 297.2,81.4 297.7,86.9 298.2,85.6 298.7,84.7 299.2,87.1 299.7,87.8 300.2,83.8 300.7,84.6 301.2,87.5 301.6,82.8 302.1,87.1 302.6,89.9 303.1,87.4 303.6,89.4 304.1,88.1 304.6,81.6 305.1,85.3 305.6,79.9" fill="none" stroke="#4fb0b2" stroke-width="2" stroke-linejoin="round"/>
<rect x="123.00" y="15.30" width="27" height="8.6" fill="#b9dfe0" stroke="#4fb0b2" stroke-width="1.6"/>
<text x="154.00" y="22.60" class="lg">使用率(%)</text>
 </svg>
 <div class="inp" style="left:9.5px;top:209.5px;width:83.5px;border-radius:2.5px 0 0 2.5px">2018-01-15</div>
 <div class="add" style="left:92px;top:209.5px;width:27.5px">～</div>
 <div class="inp" style="left:118.5px;top:209.5px;width:84px;border-radius:0 2.5px 2.5px 0">2018-01-16</div>
 <div class="btn" style="left:256px;top:209.5px;width:53px">CSV出力</div>
</div>

<!-- Storage panel -->
<div class="panel" style="left:50px;top:299px;width:207px;height:200px">
 <div class="ph">ストレージ状況</div>
 <div class="t" style="left:5px;top:31px">/</div>
 <div class="t" style="right:5px;top:31px">46% (39GB中18GB使用中)</div>
 <div class="row" style="top:47.5px;height:1px"></div>
</div>
<svg class="abs" style="left:0;top:0" width="728" height="579" viewBox="0 0 728 579" pointer-events="none">
<path d="M153.50,360.10 A52.7,52.7 0 1 1 140.39,463.84 L146.91,438.47 A26.5,26.5 0 1 0 153.50,386.30 Z" fill="#cfcfcf" stroke="#fff" stroke-width="0.8"/><path d="M140.39,463.84 A52.7,52.7 0 0 1 153.50,360.10 L153.50,386.30 A26.5,26.5 0 0 0 146.91,438.47 Z" fill="#70addf" stroke="#fff" stroke-width="0.8"/>
<rect x="117.6" y="473.8" width="5.8" height="8" fill="#cfcfcf"/>
<text x="127" y="481" font-size="7.7" fill="#555" font-family="Liberation Sans, Noto Sans CJK JP, sans-serif">空き</text>
<rect x="149.3" y="473.8" width="5.8" height="8" fill="#70addf"/>
<text x="159.3" y="481" font-size="7.7" fill="#555" font-family="Liberation Sans, Noto Sans CJK JP, sans-serif">使用中</text>
</svg>

<!-- Access point panel -->
<div class="panel" style="left:277px;top:299px;width:207px;height:59px">
 <div class="ph">アクセスポイント稼働状況</div>
 <div class="t" style="left:9.3px;top:34.5px">正常稼働中</div>
</div>

<!-- Polling panel -->
<div class="panel" style="left:277px;top:372px;width:207px;height:84px">
 <div class="ph">ポーリング状況</div>
 <div class="t" style="left:9.3px;top:34.5px">正常稼働中</div>
 <div class="row" style="top:57px;height:1px"></div>
 <div class="t" style="left:5px;top:64px">最終ポーリング日時</div>
 <div class="t" style="left:106.5px;top:64px">2018-01-16 08:51:57</div>
</div>

<!-- Version panel -->
<div class="panel" style="left:277px;top:468px;width:207px;height:51px">
 <div class="ph">バージョン情報</div>
 <div class="t" style="left:5px;top:31.5px">現在のバージョン</div>
 <div class="t" style="left:116.5px;top:31.5px">V5.6 R3 U001</div>
</div>

<!-- Network panel -->
<div class="panel" style="left:503px;top:299px;width:207px;height:97.5px">
 <div class="ph">外部ネットワーク接続状況</div>
 <div class="t" style="left:5.7px;top:31px">ping応答時間</div>
 <div class="t" style="left:108.5px;top:31px">8.8ms</div>
 <div class="row" style="top:48.3px;height:1px"></div>
 <div class="t" style="left:5.7px;top:55px">確認日時</div>
 <div class="t" style="left:108.5px;top:55px">2018-01-16 08:52:03</div>
 <div class="row" style="top:72.4px;height:1px"></div>
 <div class="t" style="left:5.7px;top:78.5px">ping送信先</div>
 <div class="t" style="left:108.5px;top:79px">ss.cachatto.com</div>
</div>

<!-- License panel -->
<div class="panel" style="left:503px;top:410px;width:207px;height:156px">
 <div class="ph">ライセンス情報</div>
 <div class="t" style="left:10.3px;top:35px">有効なライセンス</div>
 <div class="row" style="top:57.5px;height:1px"></div>
 <div class="t" style="left:5.7px;top:64px">購入ライセンス数</div>
 <div class="t" style="left:132.5px;top:64px">202</div>
 <div class="row" style="top:81.5px;height:1px"></div>
 <div class="t" style="left:5.7px;top:88px">登録ユーザー数</div>
 <div class="t" style="left:132.5px;top:88px">128</div>
 <div class="row" style="top:105.5px;height:1px"></div>
 <div class="t" style="left:5.7px;top:112px">ライセンス有効期限</div>
 <div class="t" style="left:132.5px;top:112px">2020-12-31</div>
 <div class="row" style="top:129.5px;height:1px"></div>
 <div class="t" style="left:5.7px;top:136px">死活監視</div>
 <div class="t" style="left:132.5px;top:136px">実施中</div>
</div>
</div>
</body>
</html>
